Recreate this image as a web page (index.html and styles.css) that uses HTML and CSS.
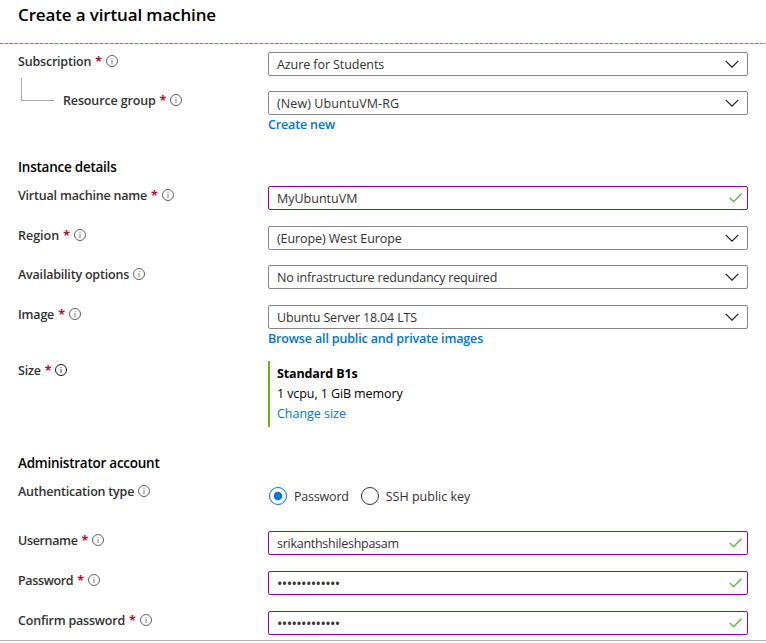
FILE: index.html
```html
<!DOCTYPE html>
<html lang="en">
<head>
<meta charset="utf-8">
<title>Create a virtual machine</title>
<link rel="stylesheet" href="styles.css">
</head>
<body>
<svg class="defs" width="0" height="0" aria-hidden="true">
  <symbol id="info" viewBox="0 0 12 12"><circle cx="6" cy="6" r="5.5" fill="none" stroke="currentColor"/><path d="M6 5v4M6 3v1.1" stroke="currentColor" stroke-width=".8"/></symbol>
  <symbol id="chevron" viewBox="0 0 14 8"><path d="M.7.9 7 7.1 13.3.9" fill="none" stroke="#222" stroke-width="1.3"/></symbol>
  <symbol id="check" viewBox="0 0 13 10"><path d="M.7 5 4.6 8.7 12.4.8" fill="none" stroke="#55b330" stroke-width="1.3"/></symbol>
</svg>
<header class="title"><h1>Create a virtual machine</h1></header>
<main class="form">
  <div class="row subscription">
    <div class="label"><span>Subscription</span><b>*</b><svg class="info"><use href="#info"/></svg></div>
    <div class="field"><span>Azure for Students</span><svg class="chevron"><use href="#chevron"/></svg></div>
  </div>
  <div class="row group">
    <div class="label nested"><i class="branch"></i><span>Resource group</span><b>*</b><svg class="info"><use href="#info"/></svg></div>
    <div><div class="field"><span>(New) UbuntuVM-RG</span><svg class="chevron"><use href="#chevron"/></svg></div><a class="link">Create new</a></div>
  </div>
  <h2>Instance details</h2>
  <div class="row vmname">
    <div class="label"><span>Virtual machine name</span><b>*</b><svg class="info"><use href="#info"/></svg></div>
    <div class="field valid"><span>MyUbuntuVM</span><svg class="check"><use href="#check"/></svg></div>
  </div>
  <div class="row region">
    <div class="label"><span>Region</span><b>*</b><svg class="info"><use href="#info"/></svg></div>
    <div class="field"><span>(Europe) West Europe</span><svg class="chevron"><use href="#chevron"/></svg></div>
  </div>
  <div class="row availability">
    <div class="label"><span>Availability options</span><svg class="info"><use href="#info"/></svg></div>
    <div class="field"><span>No infrastructure redundancy required</span><svg class="chevron"><use href="#chevron"/></svg></div>
  </div>
  <div class="row image">
    <div class="label"><span>Image</span><b>*</b><svg class="info"><use href="#info"/></svg></div>
    <div><div class="field"><span>Ubuntu Server 18.04 LTS</span><svg class="chevron"><use href="#chevron"/></svg></div><a class="link browse">Browse all public and private images</a></div>
  </div>
  <div class="row size">
    <div class="label"><span>Size</span><b>*</b><svg class="info dark"><use href="#info"/></svg></div>
    <div class="size-card"><strong>Standard B1s</strong><span>1 vcpu, 1 GiB memory</span><a>Change size</a></div>
  </div>
  <h2>Administrator account</h2>
  <div class="row auth">
    <div class="label"><span>Authentication type</span><svg class="info"><use href="#info"/></svg></div>
    <div class="radios"><i class="radio on"></i><span class="pw">Password</span><i class="radio"></i><span class="ssh">SSH public key</span></div>
  </div>
  <div class="row username">
    <div class="label"><span>Username</span><b>*</b><svg class="info"><use href="#info"/></svg></div>
    <div class="field valid"><span>srikanthshileshpasam</span><svg class="check"><use href="#check"/></svg></div>
  </div>
  <div class="row password">
    <div class="label"><span>Password</span><b>*</b><svg class="info"><use href="#info"/></svg></div>
    <div class="field valid"><span class="dots">•••••••••••••</span><svg class="check"><use href="#check"/></svg></div>
  </div>
  <div class="row confirm">
    <div class="label"><span>Confirm password</span><b>*</b><svg class="info"><use href="#info"/></svg></div>
    <div class="field valid"><span class="dots">•••••••••••••</span><svg class="check"><use href="#check"/></svg></div>
  </div>
</main>
<footer class="bottom"></footer>
</body>
</html>
```
FILE: styles.css
```css
* { box-sizing: border-box; }
body { margin: 0; height: 643px; overflow: hidden; background: #fff; color: #323130; font: 12.5px/18px "Open Sans", "Noto Sans", sans-serif; }
.defs { position: absolute; }
.title { height: 44px; padding: 3px 18px 0; background: repeating-linear-gradient(90deg, #00b0e8 0 3px, #c9bdb8 3px 5px) 0 43px / 100% 1px no-repeat; }
h1 { margin: 0; font-size: 17px; line-height: 24px; font-weight: 600; color: #000; letter-spacing: -.14px; }
.form { padding: 8px 18px 0; }
.row { display: grid; grid-template-columns: 250px 480px; align-items: start; }
.subscription { height: 39px; }
.group { height: 66px; }
.vmname { height: 40px; }
.region { height: 39px; }
.availability { height: 40px; }
.image { height: 56px; }
.size { height: 92px; }
.auth { height: 49px; }
.username, .password { height: 40px; }
.confirm { height: 29px; }
.label { display: flex; align-items: center; height: 19px; font-weight: 600; white-space: nowrap; letter-spacing: -.2px; }
.label b { width: 6px; margin-left: 4px; color: #b5102a; font-weight: 700; }
.info { width: 12px; height: 12px; margin-left: 3.5px; color: #605e5c; position: relative; top: -1px; }
.label b + .info { margin-left: 4.5px; }
.username .label, .password .label { letter-spacing: -.35px; }
.region .label { letter-spacing: 0; }
.info.dark { color: #111; }
.nested { position: relative; padding-left: 45px; letter-spacing: -.14px; }
.branch { position: absolute; left: 3px; top: -13px; width: 33px; height: 23px; border: solid #a6a6a6; border-width: 0 0 1px 1px; }
.field { display: flex; align-items: center; justify-content: space-between; height: 24px; padding: 0 8px; border: 1px solid #8a8886; border-radius: 2px; white-space: nowrap; }
.field span { padding-top: 2px; letter-spacing: -.08px; }
.vmname .field span { letter-spacing: 0; }
.group .field span { letter-spacing: .1px; }
.region .field span { letter-spacing: -.1px; }
.availability .field span { letter-spacing: -.19px; }
.image .field span { letter-spacing: -.15px; }
.username .field span { letter-spacing: -.27px; }
.valid { padding-right: 5px; border-color: #9200a6; }
.chevron { width: 14px; height: 8px; }
.check { width: 13px; height: 10px; }
.field .dots { font-size: 14.5px; letter-spacing: -.63px; }
a { color: #0072db; }
.link { display: block; font-weight: 600; line-height: 19px; letter-spacing: -.15px; }
h2 { margin: 0; height: 29px; color: #000; font-size: 13.5px; line-height: 20px; font-weight: 600; letter-spacing: -.25px; }
.size-card { display: flex; flex-direction: column; height: 66px; padding: 3px 0 0 7px; border-left: 2px solid #63b70d; color: #000; line-height: 20px; letter-spacing: -.09px; }
.size-card strong { letter-spacing: -.13px; }
.size-card a { letter-spacing: -.03px; }
.radios { display: flex; align-items: center; height: 28px; padding-left: 1px; letter-spacing: -.2px; }
.radios span { padding-top: 2px; }
.radios .ssh { letter-spacing: 0; }
.radio { display: flex; align-items: center; justify-content: center; width: 18px; height: 18px; margin-right: 7px; border: 1px solid #323130; border-radius: 50%; }
.on { border-color: #0072db; }
.on::after { content: ""; width: 10px; height: 10px; flex: none; border-radius: 50%; background: #0072db; transform: scale(.85); }
.pw { margin-right: 12px; }
.bottom { border-top: 1px solid #b3b3b3; }
```
